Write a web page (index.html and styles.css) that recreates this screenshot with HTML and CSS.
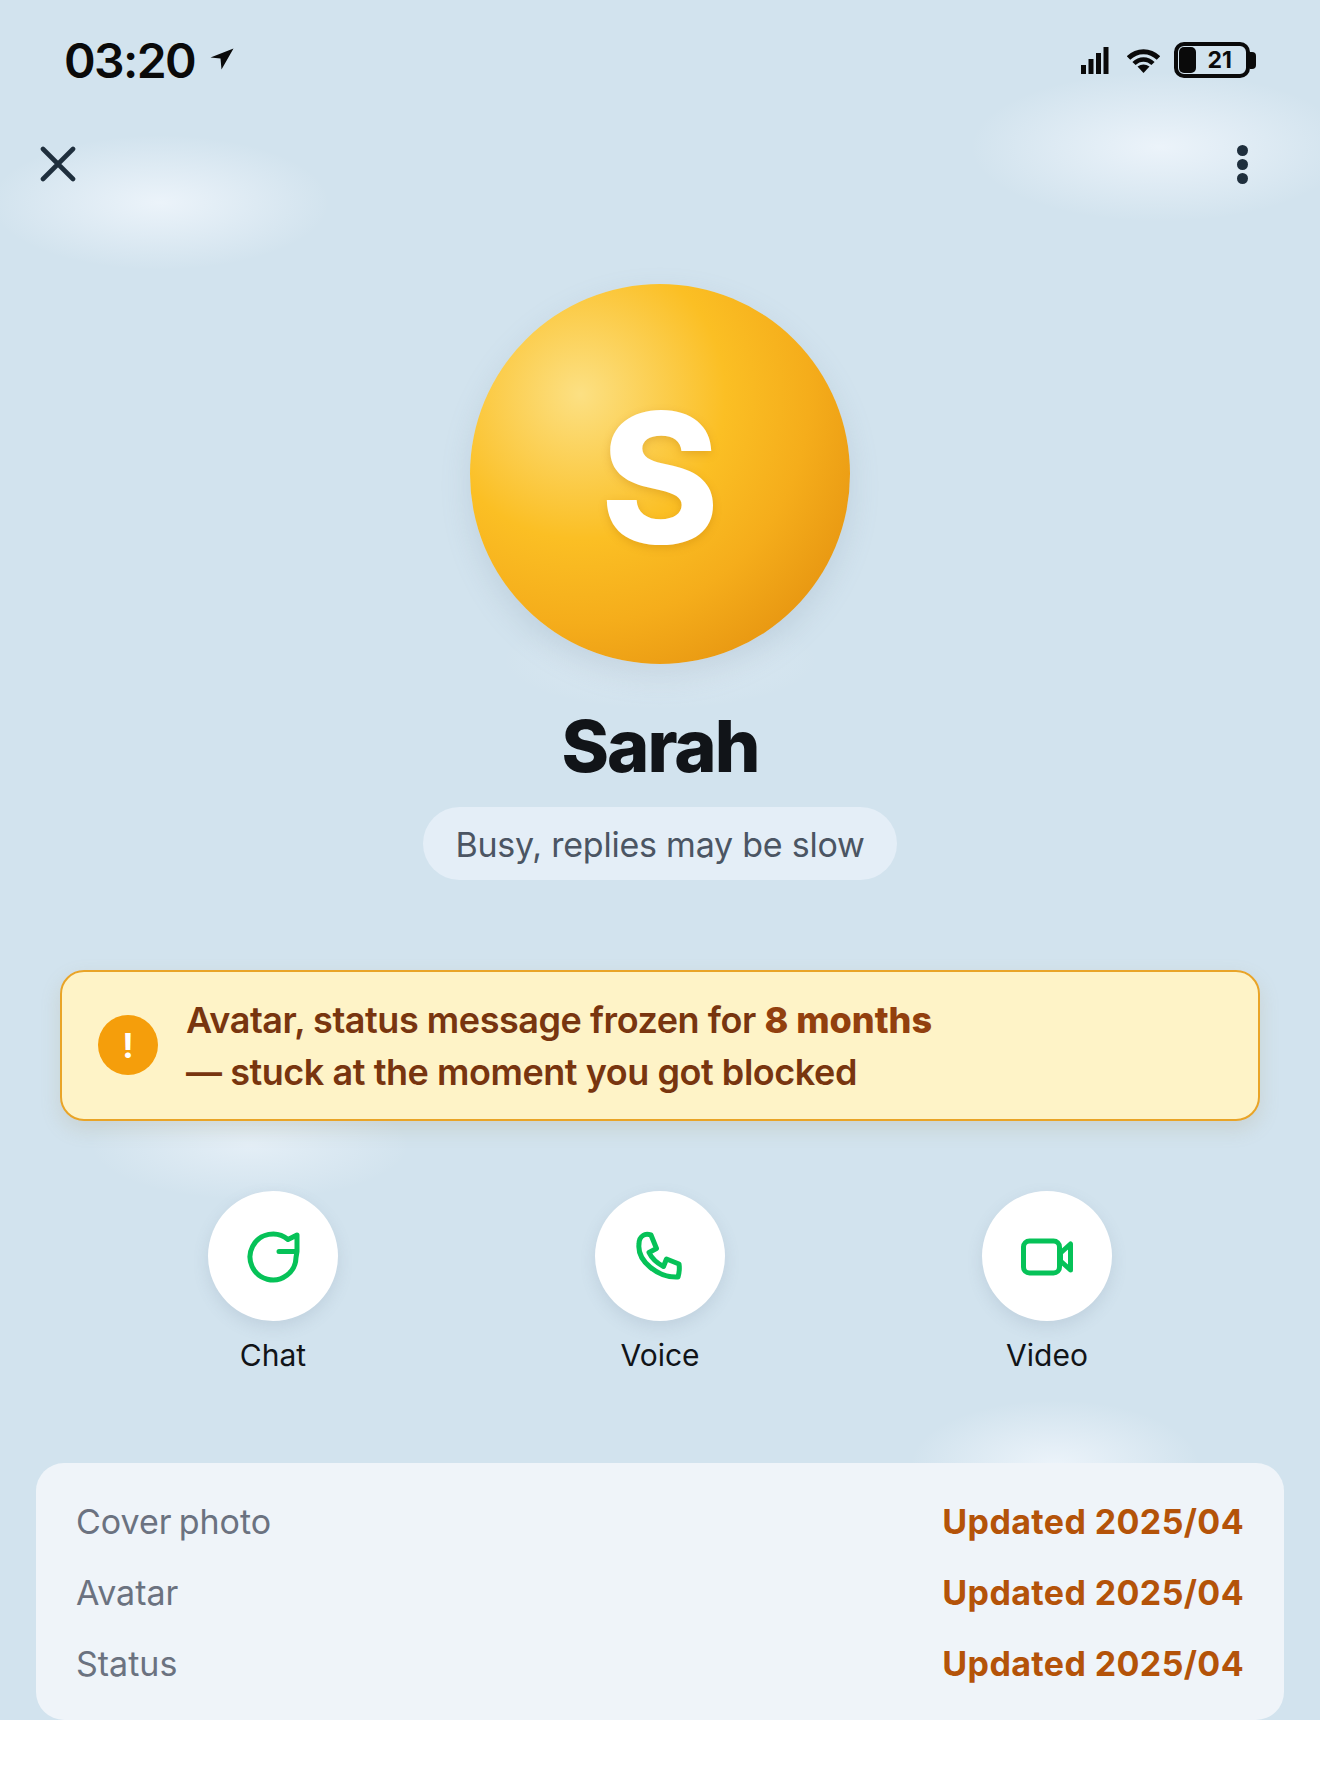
FILE: index.html
```html
<!DOCTYPE html>
<html lang="en">
<head>
  <meta charset="UTF-8" />
  <meta name="viewport" content="width=device-width, initial-scale=1.0" />
  <title>Sarah - Profile</title>
  <link rel="stylesheet" href="styles.css">
</head>
<body>
  <div class="screen">
    <div class="glow glow-a"></div>
    <div class="glow glow-b"></div>
    <div class="glow glow-c"></div>
    <div class="glow glow-d"></div>
    <div class="glow glow-e"></div>

    <div class="status-bar">
      <div class="status-left">
        <span class="time">03:20</span>
        <svg class="arrow" width="24" height="22" viewBox="0 0 24 22"><path d="M23.5 0.5 L0.5 9.5 L10.5 10.5 L11.5 21.5 Z" fill="#0a0a0a"/></svg>
      </div>
      <div class="status-right">
        <svg class="signal" width="28" height="27" viewBox="0 0 28 27">
          <rect x="0" y="18" width="5" height="9" fill="#0a0a0a"/>
          <rect x="7.5" y="12" width="5" height="15" fill="#0a0a0a"/>
          <rect x="15" y="6" width="5" height="21" fill="#0a0a0a"/>
          <rect x="22.5" y="0" width="5" height="27" fill="#0a0a0a"/>
        </svg>
        <svg class="wifi" width="33" height="25" viewBox="0 0 33 25">
          <path d="M1.5 10 C10 1.5 23 1.5 31.5 10" fill="none" stroke="#0a0a0a" stroke-width="5"/>
          <path d="M7 15.5 C12.5 10 20.5 10 26 15.5" fill="none" stroke="#0a0a0a" stroke-width="4.5"/>
          <path d="M10.5 18.5 Q16.5 14.5 22.5 18.5 L16.5 25 Z" fill="#0a0a0a"/>
        </svg>
        <div class="battery">
          <div class="battery-body">
            <div class="battery-fill"></div>
            <span class="battery-num">21</span>
          </div>
          <div class="battery-nub"></div>
        </div>
      </div>
    </div>

    <div class="nav">
      <svg width="36" height="36" viewBox="0 0 36 36"><path d="M3 3 L33 33 M33 3 L3 33" stroke="#1f2f3d" stroke-width="4.6" stroke-linecap="round"/></svg>
      <div class="dots"><span></span><span></span><span></span></div>
    </div>

    <div class="avatar">S</div>
    <h1 class="name">Sarah</h1>
    <div class="status-pill">Busy, replies may be slow</div>

    <div class="banner">
      <div class="banner-icon">!</div>
      <p>Avatar, status message frozen for <strong>8 months</strong><br>— stuck at the moment you got blocked</p>
    </div>

    <div class="actions">
      <div class="action">
        <div class="action-btn">
          <svg width="64" height="64" viewBox="0 0 64 64"><path d="M38 27.5 H56 V11 L47 15.5 A23 23 0 1 0 55 33.5 L56 27.5" fill="none" stroke="#06c258" stroke-width="5" stroke-linecap="round" stroke-linejoin="round"/></svg>
        </div>
        <span>Chat</span>
      </div>
      <div class="action">
        <div class="action-btn">
          <svg width="64" height="64" viewBox="0 0 64 64"><path d="M15 11.5 Q18 9.5 23 11 L28.5 24.5 L21 28.5 Q25 37 35.5 42.5 L38.5 35 L51 40 Q52 46 50 53 C30 54 9 37 11 20 Q11 14 15 11.5 Z" fill="none" stroke="#06c258" stroke-width="5" stroke-linejoin="round"/></svg>
        </div>
        <span>Voice</span>
      </div>
      <div class="action">
        <div class="action-btn">
          <svg width="64" height="64" viewBox="0 0 64 64">
            <rect x="8.5" y="17" width="36" height="32" rx="6" fill="none" stroke="#06c258" stroke-width="5"/>
            <path d="M45.5 29 L55.5 20 V46 L45.5 37 Z" fill="none" stroke="#06c258" stroke-width="5" stroke-linejoin="round"/>
          </svg>
        </div>
        <span>Video</span>
      </div>
    </div>

    <div class="info-card">
      <div class="info-row"><span>Cover photo</span><strong>Updated 2025/04</strong></div>
      <div class="info-row"><span>Avatar</span><strong>Updated 2025/04</strong></div>
      <div class="info-row"><span>Status</span><strong>Updated 2025/04</strong></div>
    </div>
  </div>
</body>
</html>
```

FILE: styles.css
```css
body {
  margin: 0;
  background-color: #ffffff;
  font-family: Inter, 'Noto Sans', sans-serif;
}
.screen {
  position: relative;
  height: 1720px;
  overflow: hidden;
  background-color: #d2e3ee;
  display: flex;
  flex-direction: column;
  align-items: center;
}
.screen > * {
  flex-shrink: 0;
}
.glow {
  position: absolute;
  border-radius: 50%;
  background: radial-gradient(closest-side, rgba(240, 246, 252, 0.85), rgba(240, 246, 252, 0));
}
.glow-a {
  left: -10px;
  top: 135px;
  width: 340px;
  height: 135px;
}
.glow-b {
  left: 970px;
  top: 72px;
  width: 380px;
  height: 150px;
}
.glow-c {
  left: 90px;
  top: 1090px;
  width: 320px;
  height: 110px;
  opacity: 0.7;
}
.glow-d {
  left: 910px;
  top: 1400px;
  width: 290px;
  height: 130px;
}
.glow-e {
  left: 500px;
  top: 610px;
  width: 320px;
  height: 100px;
  opacity: 0.35;
}

.status-bar {
  position: relative;
  width: 100%;
  height: 120px;
  box-sizing: border-box;
  padding: 0 64px 0 64px;
  display: flex;
  align-items: center;
  justify-content: space-between;
}
.status-left {
  display: flex;
  align-items: center;
  gap: 15px;
}
.time {
  font-size: 48px;
  font-weight: 600;
  letter-spacing: -1.6px;
  color: #0a0a0a;
}
.arrow {
  margin-top: -3px;
}
.status-right {
  display: flex;
  align-items: center;
  gap: 16px;
}
.wifi {
  margin-left: 2px;
  margin-right: -2px;
}
.battery {
  display: flex;
  align-items: center;
}
.battery-body {
  position: relative;
  width: 76px;
  height: 36px;
  box-sizing: border-box;
  border: 4px solid #0a0a0a;
  border-radius: 10px;
  display: flex;
  justify-content: flex-end;
  align-items: center;
  padding-right: 14px;
}
.battery-fill {
  position: absolute;
  left: 1px;
  top: 1px;
  bottom: 1px;
  width: 17px;
  border-radius: 5px;
  background-color: #0a0a0a;
}
.battery-num {
  font-size: 23px;
  font-weight: 700;
  color: #0a0a0a;
}
.battery-nub {
  width: 6px;
  height: 17px;
  background-color: #0a0a0a;
  border-radius: 0 4px 4px 0;
}

.nav {
  position: relative;
  width: 100%;
  height: 88px;
  box-sizing: border-box;
  padding: 0 72px 0 40px;
  display: flex;
  align-items: center;
  justify-content: space-between;
}
.dots {
  display: flex;
  flex-direction: column;
  gap: 3px;
}
.dots span {
  width: 11px;
  height: 11px;
  border-radius: 50%;
  background-color: #1f2f3d;
}

.avatar {
  position: relative;
  margin-top: 76px;
  width: 380px;
  height: 380px;
  border-radius: 50%;
  background: radial-gradient(circle at 29% 29%, #fce083 0%, #fbbf24 38%, #f5ad1b 60%, #e08a0c 94%);
  box-shadow: 0 12px 30px rgba(120, 140, 160, 0.2);
  color: #ffffff;
  font-size: 180px;
  font-weight: 800;
  line-height: 388px;
  text-align: center;
  text-shadow: 0 3px 8px rgba(170, 100, 0, 0.25);
}
.name {
  position: relative;
  margin: 38px 0 0;
  height: 88px;
  line-height: 88px;
  font-size: 72px;
  font-weight: 800;
  letter-spacing: -2px;
  color: #111418;
}
.status-pill {
  position: relative;
  margin-top: 17px;
  height: 73px;
  line-height: 75px;
  padding: 0 32px;
  border-radius: 37px;
  background-color: #e4eef7;
  color: #4b5563;
  font-size: 34px;
  letter-spacing: -0.23px;
}

.banner {
  position: relative;
  margin-top: 90px;
  width: 1200px;
  height: 151px;
  box-sizing: border-box;
  padding: 0 36px;
  display: flex;
  align-items: center;
  gap: 28px;
  background-color: #fef3c7;
  border: 2px solid #e9a427;
  border-radius: 24px;
  box-shadow: 0 8px 20px rgba(160, 140, 90, 0.18);
}
.banner-icon {
  width: 60px;
  height: 60px;
  margin-top: -1px;
  border-radius: 50%;
  background-color: #f59e0b;
  color: #ffffff;
  font-size: 34px;
  font-weight: 700;
  display: flex;
  align-items: center;
  justify-content: center;
}
.banner p {
  margin: 0;
  font-size: 36px;
  line-height: 52px;
  font-weight: 600;
  letter-spacing: -0.45px;
  color: #78350f;
}
.banner strong {
  font-weight: 800;
  letter-spacing: 0;
  color: #92400e;
}

.actions {
  position: relative;
  margin-top: 70px;
  display: grid;
  grid-template-columns: repeat(3, 387px);
}
.action {
  display: flex;
  flex-direction: column;
  align-items: center;
  gap: 14px;
  font-size: 30px;
  line-height: 40px;
  color: #111418;
}
.action-btn {
  width: 130px;
  height: 130px;
  border-radius: 50%;
  background-color: #ffffff;
  box-shadow: 0 6px 16px rgba(100, 120, 140, 0.16);
  display: flex;
  align-items: center;
  justify-content: center;
}

.info-card {
  position: relative;
  margin-top: 88px;
  width: 1248px;
  height: 257px;
  box-sizing: border-box;
  padding: 23px 40px 0;
  background-color: #eff4f9;
  border-radius: 28px;
}
.info-row {
  height: 71px;
  display: flex;
  align-items: center;
  justify-content: space-between;
  font-size: 34px;
  word-spacing: -2.5px;
  color: #6b7280;
}
.info-row strong {
  font-weight: 700;
  letter-spacing: 0.38px;
  word-spacing: 0;
  color: #b45309;
}
```
